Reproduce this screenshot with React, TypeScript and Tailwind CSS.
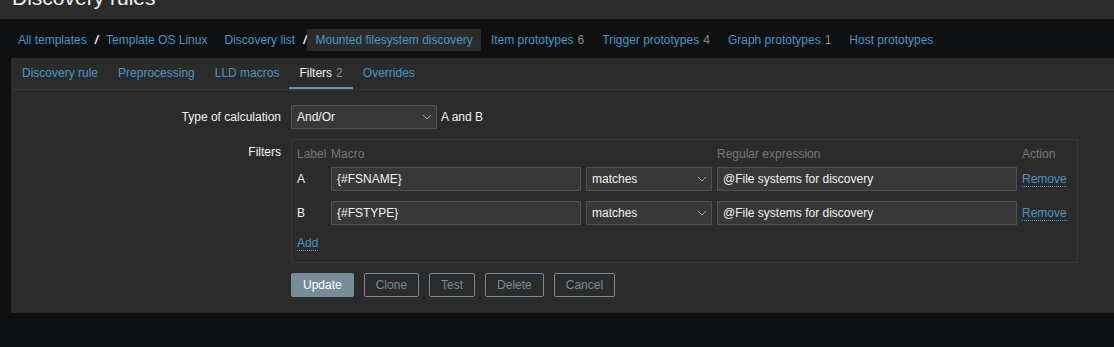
import React from 'react';

const LINK = 'text-[#4796c4]';

const Chevron: React.FC = () => (
    <svg width="10" height="6" viewBox="0 0 10 6" className="shrink-0">
        <polyline points="1,1 5,5 9,1" fill="none" stroke="#a3a3a3" strokeWidth="1" />
    </svg>
);

const Select: React.FC<{ value: string; width: string }> = ({ value, width }) => (
    <div className={`${width} h-[24px] flex items-center justify-between pl-[5px] pr-[4px] bg-[#383838] border border-[#4f4f4f] text-[#f2f2f2]`}>
        <span>{value}</span>
        <Chevron />
    </div>
);

const TextBox: React.FC<{ value: string; width: string }> = ({ value, width }) => (
    <div className={`${width} h-[24px] flex items-center px-[5px] bg-[#383838] border border-[#4f4f4f] text-[#f2f2f2]`}>
        {value}
    </div>
);

const Count: React.FC<{ n: number }> = ({ n }) => <span className="ml-[4px] text-[#8a8a8a]">{n}</span>;

const crumbs = [
    { label: 'Item prototypes', count: 6 },
    { label: 'Trigger prototypes', count: 4 },
    { label: 'Graph prototypes', count: 1 },
    { label: 'Host prototypes' },
];

const tabs = ['Discovery rule', 'Preprocessing', 'LLD macros', 'Filters', 'Overrides'];

const filters = [
    { label: 'A', macro: '{#FSNAME}' },
    { label: 'B', macro: '{#FSTYPE}' },
];

const Sep: React.FC = () => <span className="text-[#f2f2f2] font-bold italic pr-[1px]">/</span>;

export default function App() {
    return (
        <div className="w-[1114px] h-[347px] overflow-hidden bg-[#0e1012] font-['Liberation_Sans',Arial,sans-serif] text-[12px] text-[#f2f2f2]">
            {/* page title, scrolled off the top */}
            <div className="h-[19px] bg-[#2b2b2b] overflow-hidden pl-[12px]">
                <h1 className="text-[21px] leading-[21px] mt-[-13px] text-[#f2f2f2]">Discovery rules</h1>
            </div>

            {/* breadcrumbs */}
            <nav className="h-[39px] flex items-center pt-[3px] pl-[10px] leading-[22px]">
                <a className={`px-[8px] ${LINK}`}>All templates</a>
                <Sep />
                <a className={`ml-[-1px] px-[8px] ${LINK}`}>Template OS Linux</a>
                <a className={`ml-[1px] px-[8px] ${LINK}`}>Discovery list</a>
                <Sep />
                <span className="px-[8px] bg-[#2b2b2b] rounded-[2px] text-[#4796c4]">Mounted filesystem discovery</span>
                {crumbs.map(c => (
                    <a key={c.label} className={`ml-[2px] px-[8px] flex ${LINK}`}>
                        {c.label}
                        {c.count !== undefined && <Count n={c.count} />}
                    </a>
                ))}
            </nav>

            <div className="pl-[11px]">
                <div className="bg-[#2b2b2b] h-[255px]">
                    {/* tabs */}
                    <ul className="h-[32px] flex pl-[1px] pt-[1px] border-b border-[#383838]">
                        {tabs.map(t => {
                            const active = t === 'Filters';
                            return (
                                <li
                                    key={t}
                                    className={`px-[10px] flex items-center border-b-2 ${active ? 'border-[#768d99] text-[#f2f2f2]' : 'border-transparent text-[#4796c4]'}`}
                                >
                                    {t}
                                    {active && <Count n={2} />}
                                </li>
                            );
                        })}
                    </ul>

                    <div className="pt-[15px]">
                        <div className="flex items-center">
                            <label className="w-[270px] text-right">Type of calculation</label>
                            <div className="ml-[10px] flex items-center gap-[4px]">
                                <Select value="And/Or" width="w-[146px]" />
                                <span>A and B</span>
                            </div>
                        </div>

                        <div className="flex mt-[10px]">
                            <label className="w-[270px] text-right pt-[4px]">Filters</label>
                            <div className="ml-[10px] w-[787px] h-[124px] border border-[#383838] pl-[5px] pt-[5px]">
                                <div className="flex h-[17px] items-center text-[#787878]">
                                    <span className="w-[34px]">Label</span>
                                    <span className="w-[386px]">Macro</span>
                                    <span className="w-[305px]">Regular expression</span>
                                    <span>Action</span>
                                </div>
                                <div className="mt-[5px] flex flex-col gap-[10px]">
                                    {filters.map(f => (
                                        <div key={f.label} className="flex items-center gap-[5px]">
                                            <span className="w-[29px]">{f.label}</span>
                                            <TextBox value={f.macro} width="w-[250px]" />
                                            <Select value="matches" width="w-[126px]" />
                                            <TextBox value="@File systems for discovery" width="w-[300px]" />
                                            <a className={`${LINK} border-b border-dotted border-[#4796c4] leading-[14px]`}>Remove</a>
                                        </div>
                                    ))}
                                </div>
                                <div className="mt-[9px]">
                                    <a className={`${LINK} border-b border-dotted border-[#4796c4] leading-[14px] inline-block`}>Add</a>
                                </div>
                            </div>
                        </div>

                        <div className="flex gap-[10px] mt-[10px] ml-[280px]">
                            <button className="h-[24px] px-[11px] rounded-[2px] border border-[#768d99] bg-[#768d99] text-white">Update</button>
                            {['Clone', 'Test', 'Delete', 'Cancel'].map(b => (
                                <button key={b} className="h-[24px] px-[11px] rounded-[2px] border border-[#768d99] text-[#768d99]">
                                    {b}
                                </button>
                            ))}
                        </div>
                    </div>
                </div>
            </div>
        </div>
    );
}
